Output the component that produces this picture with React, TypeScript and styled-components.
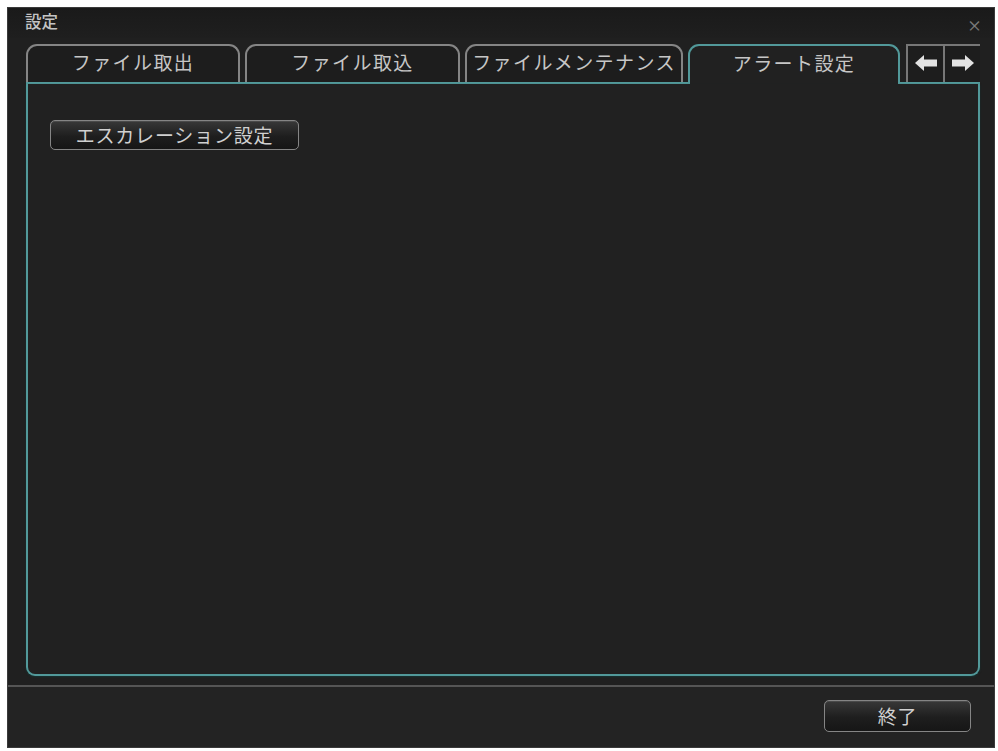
import React from 'react';
import styled, { createGlobalStyle } from 'styled-components';

const teal = '#52999a';

const GlobalStyle = createGlobalStyle`
  * { box-sizing: border-box; }
  body {
    margin: 0;
    background: #ffffff;
    font-family: "Noto Sans CJK JP", "Noto Sans", sans-serif;
  }
`

const Window = styled.div`
  width: 988px;
  height: 741px;
  margin: 7px;
  background: #202020;
  display: flex;
  flex-direction: column;
  border: 1px solid #3a3a3a;
`

const TitleBar = styled.div`
  height: 30px;
  flex: none;
  display: flex;
  align-items: center;
  justify-content: space-between;
  padding: 0 12px 4px 17px;
  background: linear-gradient(#1a1a1a, #1f1f1f);
  color: #c4c4c4;
  font-size: 16.5px;
  font-weight: 500;
`

const Close = styled.span`
  color: #7a7a7a;
  font-size: 15px;
  margin-top: 6px;
`

const Main = styled.div`
  flex: 1;
  display: flex;
  flex-direction: column;
  padding: 6px 14px 0 18px;
`

const TabRow = styled.div`
  height: 40px;
  flex: none;
  display: flex;
  gap: 5px;
  border-bottom: 2px solid ${teal};
`

const Tab = styled.div<{ $width: number; $active?: boolean }>`
  width: ${p => p.$width}px;
  flex: none;
  display: flex;
  align-items: center;
  justify-content: center;
  padding-bottom: 5px;
  border: 2px solid ${p => (p.$active ? teal : '#858585')};
  border-bottom: none;
  border-radius: 11px 11px 0 0;
  background: ${p => (p.$active ? '#212121' : '#1d1d1d')};
  margin-bottom: ${p => (p.$active ? '-2px' : '0')};
  color: #c6c6c6;
  font-size: 19px;
  letter-spacing: 1.4px;
`

const ArrowGroup = styled.div`
  flex: 1;
  display: flex;
  margin-left: 1px;
`

const ArrowBox = styled.div`
  flex: 1;
  display: flex;
  align-items: center;
  justify-content: center;
  padding-bottom: 3px;
  border-top: 2px solid #777;
  border-left: 2px solid #777;
  background: #1d1d1d;
`

const Panel = styled.div`
  flex: 1;
  border: 2px solid ${teal};
  border-top: none;
  border-radius: 0 0 9px 9px;
  background: #212121;
  padding: 36px 22px;
  margin-bottom: 9px;
  box-shadow: 0 1px 2px #163331;
`

const Button = styled.button<{ $width: number; $height: number }>`
  width: ${p => p.$width}px;
  height: ${p => p.$height}px;
  display: flex;
  align-items: center;
  justify-content: center;
  border: 1.5px solid #858585;
  border-radius: 5px;
  background: linear-gradient(#383838, #1e1e1e 55%, #161616);
  color: #d0d0d0;
  font-family: "Noto Sans CJK JP", "Noto Sans", sans-serif;
  font-size: 19px;
  letter-spacing: 0.8px;
  padding: 0 0 2px;
  box-shadow: inset 0 1px 0 #4a4a4a;
`

const Footer = styled.div`
  height: 62px;
  flex: none;
  border-top: 2px solid #555;
  background: #232323;
  display: flex;
  align-items: center;
  justify-content: flex-end;
  padding: 0 23px 2px 0;
`

const ArrowIcon = ({ dir }: { dir: 'left' | 'right' }) => (
  <svg width="22" height="16" viewBox="0 0 22 16">
    <polygon
      points="0,8 9,0 9,4.5 22,4.5 22,11.5 9,11.5 9,16"
      fill="#e2e2e2"
      transform={dir === 'right' ? 'translate(22 0) scale(-1 1)' : undefined}
    />
  </svg>
)

const tabs = [
  { label: 'ファイル取出', width: 214 },
  { label: 'ファイル取込', width: 215 },
  { label: 'ファイルメンテナンス', width: 218 },
  { label: 'アラート設定', width: 212, active: true },
]

export default function App() {
  return (
    <>
      <GlobalStyle />
      <Window>
        <TitleBar>
          <span>設定</span>
          <Close>×</Close>
        </TitleBar>
        <Main>
          <TabRow>
            {tabs.map(t => (
              <Tab key={t.label} $width={t.width} $active={t.active}>
                {t.label}
              </Tab>
            ))}
            <ArrowGroup>
              <ArrowBox><ArrowIcon dir="left" /></ArrowBox>
              <ArrowBox><ArrowIcon dir="right" /></ArrowBox>
            </ArrowGroup>
          </TabRow>
          <Panel>
            <Button $width={249} $height={30}>エスカレーション設定</Button>
          </Panel>
        </Main>
        <Footer>
          <Button $width={147} $height={32}>終了</Button>
        </Footer>
      </Window>
    </>
  )
}
